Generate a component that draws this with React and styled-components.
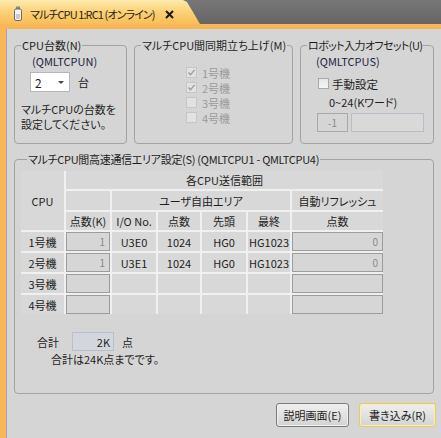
import React from 'react';
import styled, { createGlobalStyle } from 'styled-components';

const GlobalStyle = createGlobalStyle`
  html, body {
    margin: 0;
    padding: 0;
  }
  body {
    width: 441px;
    height: 438px;
    overflow: hidden;
    background: #6a6a6a;
    font-family: "Noto Sans CJK JP", "Noto Sans", sans-serif;
    font-size: 11px;
    font-feature-settings: "palt";
    letter-spacing: 0;
    color: #1e1e1e;
  }
`;

const cpuRows = [
  { name: '1号機', points: '1', io: 'U3E0', size: '1024', head: 'HG0', last: 'HG1023', refresh: '0' },
  { name: '2号機', points: '1', io: 'U3E1', size: '1024', head: 'HG0', last: 'HG1023', refresh: '0' },
  { name: '3号機' },
  { name: '4号機' },
];

const syncItems = [
  { label: '1号機', checked: true },
  { label: '2号機', checked: true },
  { label: '3号機', checked: false },
  { label: '4号機', checked: false },
];

const VialIcon = () => (
  <svg width="10" height="15" viewBox="0 0 10 15">
    <rect x="3" y="0.5" width="4" height="2.5" fill="#8a8a8a" />
    <rect x="1.5" y="3" width="7" height="11.5" rx="1.5" fill="#f4f4f4" stroke="#6a6a6a" />
    <rect x="3" y="8" width="4" height="5" fill="#c9c9c9" />
  </svg>
);

const CloseIcon = () => (
  <svg width="9" height="9" viewBox="0 0 9 9">
    <path d="M1 1 L8 8 M8 1 L1 8" stroke="#1a1a1a" strokeWidth="2" />
  </svg>
);

const CheckMark = () => (
  <svg width="9" height="9" viewBox="0 0 9 9">
    <path d="M1.5 4.5 L3.5 6.8 L7.5 1.8" stroke="#9a9a9a" strokeWidth="1.3" fill="none" />
  </svg>
);

const App = () => {
  return (
    <Window>
      <GlobalStyle />
      <TabBar>
        <Tab>
          <VialIcon />
          <TabTitle>マルチCPU 1:RC1 (オンライン)</TabTitle>
          <CloseButton>
            <CloseIcon />
          </CloseButton>
        </Tab>
      </TabBar>

      <Frame>
        <Body>
          <TopRow>
            <Group $width={113}>
              <Legend>CPU台数(N)</Legend>
              <SubLabel $indent={17}>(QMLTCPUN)</SubLabel>
              <SelectRow>
                <Select>
                  <span>2</span>
                  <Arrow />
                </Select>
                <span>台</span>
              </SelectRow>
              <Note>
                マルチCPUの台数を
                <br />
                設定してください。
              </Note>
            </Group>

            <Group $width={159}>
              <Legend>マルチCPU間同期立ち上げ(M)</Legend>
              <CheckList>
                {syncItems.map((item) => (
                  <CheckRow key={item.label} $disabled>
                    <CheckBox $disabled>{item.checked && <CheckMark />}</CheckBox>
                    {item.label}
                  </CheckRow>
                ))}
              </CheckList>
            </Group>

            <Group $width={134}>
              <Legend $spacing={-0.6}>ロボット入力オフセット(U)</Legend>
              <SubLabel $indent={15}>(QMLTCPUS)</SubLabel>
              <ManualRow>
                <CheckBox />
                手動設定
              </ManualRow>
              <RangeLabel>0~24(Kワード)</RangeLabel>
              <OffsetRow>
                <ValueBox $width={31}>-1</ValueBox>
                <TextBox />
              </OffsetRow>
            </Group>
          </TopRow>

          <AreaGroup>
            <Legend $spacing={-0.3}>マルチCPU間高速通信エリア設定(S) (QMLTCPU1 - QMLTCPU4)</Legend>
            <Table>
              <Cell $col="1" $row="1 / span 3">CPU</Cell>
              <Cell $col="2 / span 6" $row="1">各CPU送信範囲</Cell>
              <Cell $col="2" $row="2" />
              <Cell $col="3 / span 4" $row="2">ユーザ自由エリア</Cell>
              <Cell $col="7" $row="2">自動リフレッシュ</Cell>
              <Cell $col="2" $row="3">点数(K)</Cell>
              <Cell $col="3" $row="3">I/O No.</Cell>
              <Cell $col="4" $row="3">点数</Cell>
              <Cell $col="5" $row="3">先頭</Cell>
              <Cell $col="6" $row="3">最終</Cell>
              <Cell $col="7" $row="3">点数</Cell>
              {cpuRows.map((cpu) => (
                <React.Fragment key={cpu.name}>
                  <Cell>{cpu.name}</Cell>
                  <InputCell>{cpu.points}</InputCell>
                  <Cell>{cpu.io}</Cell>
                  <Cell>{cpu.size}</Cell>
                  <Cell>{cpu.head}</Cell>
                  <Cell>{cpu.last}</Cell>
                  <InputCell>{cpu.refresh}</InputCell>
                </React.Fragment>
              ))}
            </Table>

            <TotalRow>
              <span>合計</span>
              <TotalBox>2K</TotalBox>
              <span>点</span>
            </TotalRow>
            <TotalNote>合計は24K点までです。</TotalNote>
          </AreaGroup>

          <ButtonRow>
            <Button $width={73}>説明画面(E)</Button>
            <Button $width={77} $primary>
              書き込み(R)
            </Button>
          </ButtonRow>
        </Body>
      </Frame>
    </Window>
  );
};

export default App;

const Window = styled.div`
  width: 441px;
  height: 438px;
  display: flex;
  flex-direction: column;
`;

const TabBar = styled.div`
  height: 24px;
  background: linear-gradient(#777 0%, #656565 100%);
  display: flex;
  align-items: flex-end;
`;

const Tab = styled.div`
  width: 200px;
  height: 24px;
  box-sizing: border-box;
  padding: 3px 0 0 13px;
  display: flex;
  align-items: center;
  gap: 7px;
  background: linear-gradient(#fdebb0 0%, #fcd37a 45%, #f9bd55 100%);
  clip-path: polygon(0 0, 183px 0, 187px 2px, 200px 24px, 0 24px);
`;

const TabTitle = styled.span`
  font-size: 11px;
  letter-spacing: -0.9px;
  color: #1f1f1f;
`;

const CloseButton = styled.span`
  display: flex;
  margin-left: 3px;
  margin-top: 1px;
`;

const Frame = styled.div`
  flex: 1;
  display: flex;
  border-top: 5px solid #f8b657;
  border-left: 6px solid #f8b657;
  background: #d5d5d5;
`;

const Body = styled.div`
  flex: 1;
  border-left: 1px solid #9ea6c8;
  padding: 9px 7px 0 7px;
  display: flex;
  flex-direction: column;
`;

const TopRow = styled.div`
  display: flex;
  gap: 7px;
`;

const Group = styled.fieldset`
  width: ${(p) => p.$width}px;
  height: 106px;
  box-sizing: border-box;
  margin: 0;
  padding: 0;
  min-width: 0;
  border: 1px solid #a2a2a2;
  border-radius: 4px;
`;

const Legend = styled.legend`
  margin-left: 6px;
  padding: 0 1px;
  line-height: 14px;
  white-space: nowrap;
  letter-spacing: ${(p) => p.$spacing || 0}px;
`;

const SubLabel = styled.div`
  margin: 2px 0 0 ${(p) => p.$indent}px;
  line-height: 14px;
  color: #1c2340;
`;

const SelectRow = styled.div`
  display: flex;
  align-items: center;
  gap: 8px;
  margin: 4px 0 0 15px;
`;

const Select = styled.div`
  width: 40px;
  height: 20px;
  box-sizing: border-box;
  background: #fff;
  border: 1px solid #b3b6bf;
  display: flex;
  align-items: center;
  justify-content: space-between;
  padding: 0 5px 0 4px;
  font-size: 12px;
`;

const Arrow = styled.span`
  width: 0;
  height: 0;
  border-left: 3px solid transparent;
  border-right: 3px solid transparent;
  border-top: 3px solid #444;
`;

const Note = styled.div`
  margin: 10px 0 0 6px;
  line-height: 15px;
`;

const CheckList = styled.div`
  margin: 13px 0 0 51px;
  display: flex;
  flex-direction: column;
`;

const CheckRow = styled.label`
  display: flex;
  align-items: center;
  gap: 5px;
  height: 15px;
  color: ${(p) => (p.$disabled ? '#9b9b9b' : '#1e1e1e')};
`;

const CheckBox = styled.span`
  width: 11px;
  height: 11px;
  box-sizing: border-box;
  display: flex;
  align-items: center;
  justify-content: center;
  border: 1px solid ${(p) => (p.$disabled ? '#c6c6c6' : '#a9a9a9')};
  background: ${(p) => (p.$disabled ? '#e2e2e2' : 'linear-gradient(#e6e6e6, #f6f6f6)')};
`;

const ManualRow = styled.label`
  display: flex;
  align-items: center;
  gap: 3px;
  height: 15px;
  margin: 8px 0 0 17px;
  font-size: 11.5px;
`;

const RangeLabel = styled.div`
  margin: 4px 0 0 28px;
  line-height: 14px;
`;

const OffsetRow = styled.div`
  display: flex;
  gap: 3px;
  margin: 4px 0 0 16px;
`;

const ValueBox = styled.div`
  width: ${(p) => p.$width}px;
  height: 19px;
  box-sizing: border-box;
  border: 1px solid #a8a8a8;
  display: flex;
  align-items: center;
  justify-content: center;
  color: #8a8a8a;
  font-size: 10px;
`;

const TextBox = styled.div`
  width: 73px;
  height: 19px;
  box-sizing: border-box;
  border: 1px solid #b9bdc8;
  background: #d9d9d9;
`;

const AreaGroup = styled(Group)`
  width: 420px;
  height: 242px;
  margin-top: 8px;
  padding: 0 0 0 6px;
`;

const Table = styled.div`
  display: grid;
  grid-template-columns: 43px 44px 44px 42px 44px 42px 91px;
  grid-template-rows: 18px 19px 18px repeat(4, 19px);
  gap: 2px;
  width: max-content;
  margin-top: 5px;
  background: #f0f0f0;
`;

const Cell = styled.div`
  grid-column: ${(p) => p.$col || 'auto'};
  grid-row: ${(p) => p.$row || 'auto'};
  background: #d8d8d8;
  display: flex;
  align-items: center;
  justify-content: center;
  white-space: nowrap;
  color: #1e1e1e;
`;

const InputCell = styled.div`
  background: #d6d6d6;
  border: 1.5px solid #9c9c9c;
  box-sizing: border-box;
  display: flex;
  align-items: center;
  justify-content: flex-end;
  padding-right: 4px;
  color: #8a8a8a;
  font-size: 10px;
`;

const TotalRow = styled.div`
  display: flex;
  align-items: center;
  gap: 8px;
  margin: 18px 0 0 16px;
`;

const TotalBox = styled.div`
  width: 42px;
  height: 19px;
  box-sizing: border-box;
  border: 1px solid #b8bfcf;
  background: #d3d6dc;
  display: flex;
  align-items: center;
  justify-content: flex-end;
  padding-right: 3px;
  margin-left: 5px;
`;

const TotalNote = styled.div`
  margin: 1px 0 0 30px;
  line-height: 14px;
`;

const ButtonRow = styled.div`
  display: flex;
  justify-content: flex-end;
  gap: 10px;
  margin: 9px -2px 0 0;
`;

const Button = styled.button`
  width: ${(p) => p.$width}px;
  height: 24px;
  padding: 0;
  font-family: inherit;
  font-size: 11px;
  font-feature-settings: "palt";
  color: #1e1e1e;
  border-radius: 3px;
  border: 1px solid ${(p) => (p.$primary ? '#e9cc5c' : '#7b7b7b')};
  box-shadow: inset 0 0 0 1px ${(p) => (p.$primary ? '#fbeeb4' : '#efefef')};
  background: linear-gradient(#efefef 0%, #e2e2e2 50%, #d3d3d3 100%);
`;
